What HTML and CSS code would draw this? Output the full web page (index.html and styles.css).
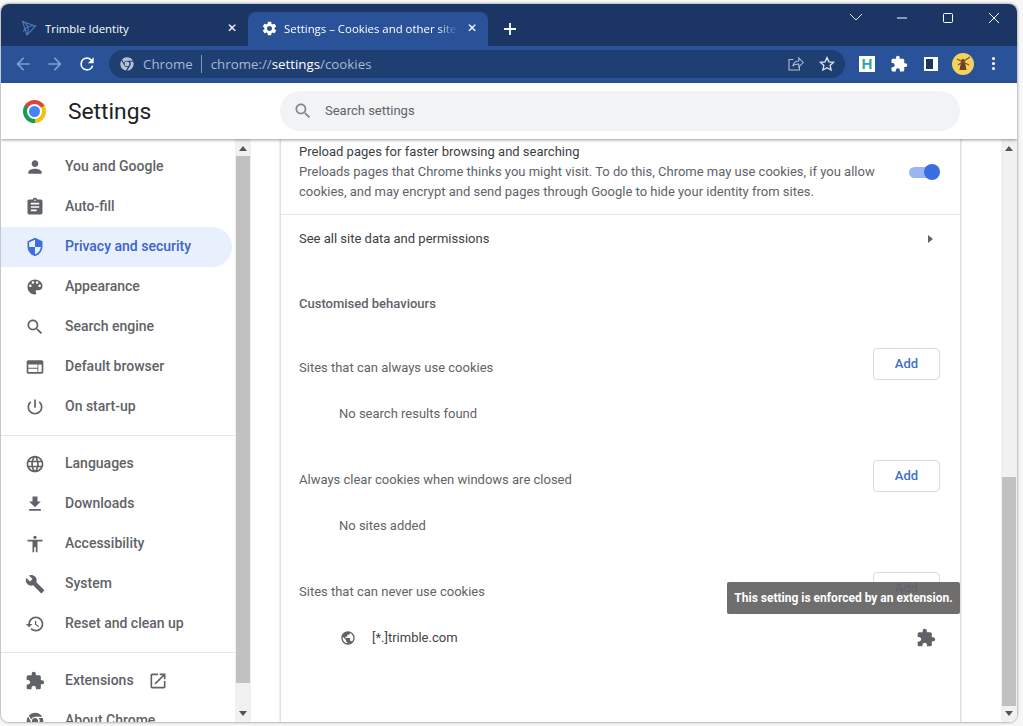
FILE: index.html
```html
<!DOCTYPE html>
<html lang="en">
<head>
<meta charset="utf-8">
<title>Settings – Cookies and other site settings</title>
<link rel="stylesheet" href="styles.css">
</head>
<body>
<svg class="defs" width="0" height="0">
  <symbol id="i-person" viewBox="0 0 24 24"><path d="M12 12c2.21 0 4-1.79 4-4s-1.79-4-4-4-4 1.79-4 4 1.79 4 4 4zm0 2c-2.67 0-8 1.34-8 4v2h16v-2c0-2.66-5.33-4-8-4z"/></symbol>
  <symbol id="i-assign" viewBox="0 0 24 24"><path d="M19 3h-4.18C14.4 1.84 13.3 1 12 1c-1.3 0-2.4.84-2.82 2H5c-1.1 0-2 .9-2 2v14c0 1.1.9 2 2 2h14c1.1 0 2-.9 2-2V5c0-1.1-.9-2-2-2zm-7 0c.55 0 1 .45 1 1s-.45 1-1 1-1-.45-1-1 .45-1 1-1zm2 14H7v-2h7v2zm3-4H7v-2h10v2zm0-4H7V7h10v2z"/></symbol>
  <symbol id="i-shield" viewBox="0 0 24 24"><path d="M12 1L3 5v6c0 5.55 3.84 10.74 9 12 5.16-1.26 9-6.45 9-12V5l-9-4zm0 10.99h7c-.53 4.12-3.28 7.79-7 8.94V12H5V6.3l7-3.11v8.8z"/></symbol>
  <symbol id="i-palette" viewBox="0 0 24 24"><path d="M12 3c-4.97 0-9 4.03-9 9s4.03 9 9 9c.83 0 1.5-.67 1.5-1.5 0-.39-.15-.74-.39-1.01-.23-.26-.38-.61-.38-.99 0-.83.67-1.5 1.5-1.5H16c2.76 0 5-2.24 5-5 0-4.42-4.03-8-9-8zm-5.5 9c-.83 0-1.5-.67-1.5-1.5S5.67 9 6.5 9 8 9.67 8 10.5 7.33 12 6.5 12zm3-4C8.67 8 8 7.33 8 6.5S8.67 5 9.5 5s1.5.67 1.5 1.5S10.33 8 9.5 8zm5 0c-.83 0-1.5-.67-1.5-1.5S13.67 5 14.5 5s1.5.67 1.5 1.5S15.33 8 14.5 8zm3 4c-.83 0-1.5-.67-1.5-1.5S16.67 9 17.5 9s1.5.67 1.5 1.5-.67 1.5-1.5 1.5z"/></symbol>
  <symbol id="i-search" viewBox="0 0 24 24"><path d="M15.5 14h-.79l-.28-.27C15.41 12.59 16 11.11 16 9.5 16 5.91 13.09 3 9.5 3S3 5.91 3 9.5 5.91 16 9.5 16c1.61 0 3.09-.59 4.23-1.57l.27.28v.79l5 4.99L20.49 19l-4.99-5zm-6 0C7.01 14 5 11.99 5 9.5S7.01 5 9.5 5 14 7.01 14 9.5 11.99 14 9.5 14z"/></symbol>
  <symbol id="i-web" viewBox="0 0 24 24"><path d="M20 4H4c-1.1 0-1.99.9-1.99 2L2 18c0 1.1.9 2 2 2h16c1.1 0 2-.9 2-2V6c0-1.1-.9-2-2-2zm-5 14H4v-4h11v4zm0-5H4V9h11v4zm5 5h-4V9h4v9z"/></symbol>
  <symbol id="i-power" viewBox="0 0 24 24"><path d="M13 3h-2v10h2V3zm4.83 2.17l-1.42 1.42C17.99 7.86 19 9.81 19 12c0 3.87-3.13 7-7 7s-7-3.13-7-7c0-2.19 1.01-4.14 2.58-5.42L6.17 5.17C4.23 6.82 3 9.26 3 12c0 4.97 4.03 9 9 9s9-4.03 9-9c0-2.74-1.23-5.18-3.17-6.83z"/></symbol>
  <symbol id="i-lang" viewBox="0 0 24 24"><path d="M11.99 2C6.47 2 2 6.48 2 12s4.47 10 9.99 10C17.52 22 22 17.52 22 12S17.52 2 11.99 2zm6.93 6h-2.95c-.32-1.25-.78-2.45-1.38-3.56 1.84.63 3.37 1.91 4.33 3.56zM12 4.04c.83 1.2 1.48 2.53 1.91 3.96h-3.82c.43-1.43 1.08-2.76 1.91-3.96zM4.26 14C4.1 13.36 4 12.69 4 12s.1-1.36.26-2h3.38c-.08.66-.14 1.32-.14 2 0 .68.06 1.34.14 2H4.26zm.82 2h2.95c.32 1.25.78 2.45 1.38 3.56-1.84-.63-3.37-1.9-4.33-3.56zm2.95-8H5.08c.96-1.66 2.49-2.93 4.33-3.56C8.81 5.55 8.35 6.75 8.03 8zM12 19.96c-.83-1.2-1.48-2.53-1.91-3.96h3.82c-.43 1.43-1.08 2.76-1.91 3.96zM14.34 14H9.66c-.09-.66-.16-1.32-.16-2 0-.68.07-1.35.16-2h4.68c.09.65.16 1.32.16 2 0 .68-.07 1.34-.16 2zm.25 5.56c.6-1.11 1.06-2.31 1.38-3.56h2.95c-.96 1.65-2.49 2.93-4.33 3.56zM16.36 14c.08-.66.14-1.32.14-2 0-.68-.06-1.34-.14-2h3.38c.16.64.26 1.31.26 2s-.1 1.36-.26 2h-3.38z"/></symbol>
  <symbol id="i-down" viewBox="0 0 24 24"><path d="M19 9h-4V3H9v6H5l7 7 7-7zM5 18v2h14v-2H5z"/></symbol>
  <symbol id="i-access" viewBox="0 0 24 24"><path d="M12 2c1.1 0 2 .9 2 2s-.9 2-2 2-2-.9-2-2 .9-2 2-2zm9 7h-6v13h-2v-6h-2v6H9V9H3V7h18v2z"/></symbol>
  <symbol id="i-build" viewBox="0 0 24 24"><path d="M22.7 19l-9.1-9.1c.9-2.3.4-5-1.5-6.9-2-2-5-2.4-7.4-1.3L9 6 6 9 1.6 4.7C.4 7.1.9 10.1 2.9 12.1c1.9 1.9 4.6 2.4 6.9 1.5l9.1 9.1c.4.4 1 .4 1.4 0l2.3-2.3c.5-.4.5-1.1.1-1.4z"/></symbol>
  <symbol id="i-restore" viewBox="0 0 24 24"><path d="M13 3c-4.97 0-9 4.03-9 9H1l3.89 3.89.07.14L9 12H6c0-3.87 3.13-7 7-7s7 3.13 7 7-3.13 7-7 7c-1.93 0-3.68-.79-4.94-2.06l-1.42 1.42C8.27 19.99 10.51 21 13 21c4.97 0 9-4.03 9-9s-4.03-9-9-9zm-1 5v5l4.28 2.54.72-1.21-3.5-2.08V8H12z"/></symbol>
  <symbol id="i-ext" viewBox="0 0 24 24"><path d="M20.5 11H19V7c0-1.1-.9-2-2-2h-4V3.5C13 2.12 11.88 1 10.5 1S8 2.12 8 3.5V5H4c-1.1 0-1.99.9-1.99 2v3.8H3.5c1.49 0 2.7 1.21 2.7 2.7s-1.21 2.7-2.7 2.7H2V20c0 1.1.9 2 2 2h3.8v-1.5c0-1.49 1.21-2.7 2.7-2.7 1.49 0 2.7 1.21 2.7 2.7V22H17c1.1 0 2-.9 2-2v-4h1.5c1.38 0 2.5-1.12 2.5-2.5S21.88 11 20.5 11z"/></symbol>
  <symbol id="i-open" viewBox="0 0 24 24"><path d="M19 19H5V5h7V3H5c-1.11 0-2 .9-2 2v14c0 1.1.89 2 2 2h14c1.1 0 2-.9 2-2v-7h-2v7zM14 3v2h3.59l-9.83 9.83 1.41 1.41L19 6.41V10h2V3h-7z"/></symbol>
  <symbol id="i-public" viewBox="0 0 24 24"><path d="M12 2C6.48 2 2 6.48 2 12s4.48 10 10 10 10-4.48 10-10S17.52 2 12 2zm-1 17.93c-3.95-.49-7-3.85-7-7.93 0-.62.08-1.21.21-1.79L9 15v1c0 1.1.9 2 2 2v1.93zm6.9-2.54c-.26-.81-1-1.39-1.9-1.39h-1v-3c0-.55-.45-1-1-1H8v-2h2c.55 0 1-.45 1-1V7h2c1.1 0 2-.9 2-2v-.41c2.93 1.19 5 4.06 5 7.41 0 2.08-.8 3.97-2.1 5.39z"/></symbol>
  <symbol id="i-gear" viewBox="0 0 24 24"><path d="M19.14 12.94c.04-.3.06-.61.06-.94 0-.32-.02-.64-.07-.94l2.03-1.58c.18-.14.23-.41.12-.61l-1.92-3.32c-.12-.22-.37-.29-.59-.22l-2.39.96c-.5-.38-1.03-.7-1.62-.94l-.36-2.54c-.04-.24-.24-.41-.48-.41h-3.84c-.24 0-.43.17-.47.41l-.36 2.54c-.59.24-1.13.57-1.62.94l-2.39-.96c-.22-.08-.47 0-.59.22L2.74 8.87c-.12.21-.08.47.12.61l2.03 1.58c-.05.3-.09.63-.09.94s.02.64.07.94l-2.03 1.58c-.18.14-.23.41-.12.61l1.92 3.32c.12.22.37.29.59.22l2.39-.96c.5.38 1.03.7 1.62.94l.36 2.54c.05.24.24.41.48.41h3.84c.24 0 .44-.17.47-.41l.36-2.54c.59-.24 1.13-.56 1.62-.94l2.39.96c.22.08.47 0 .59-.22l1.92-3.32c.12-.22.07-.47-.12-.61l-2.01-1.58zM12 15.6c-1.98 0-3.6-1.62-3.6-3.6s1.62-3.6 3.6-3.6 3.6 1.62 3.6 3.6-1.62 3.6-3.6 3.6z"/></symbol>
  <symbol id="i-chrome" viewBox="0 0 24 24"><path d="M12 2a10 10 0 0 1 8.66 5H12a5 5 0 0 0-4.62 3.09L4.6 5.3A10 10 0 0 1 12 2zM3.6 6.6l4.3 7.7a5 5 0 0 0 5.3 2.6l-2.8 5A10 10 0 0 1 3.6 6.6zM21.3 8.5a10 10 0 0 1-9 13.5l4.4-7.5a5 5 0 0 0-.3-6z"/><circle cx="12" cy="12" r="3.6"/></symbol>
</svg>

<div class="window">
  <div class="tabstrip">
    <div class="tab">
      <svg class="favicon" viewBox="0 0 16 16"><g fill="none" stroke="#4f78b8" stroke-width="1.1"><path d="M1.5 1.5L14.5 6 6 15z"/><path d="M1.5 1.5C6 3 9 8 6 15M14.5 6C9 5 4 8 2.5 11.5"/></g></svg>
      <span class="tab-title">Trimble Identity</span>
      <span class="tab-close">✕</span>
    </div>
    <div class="tab tab-active">
      <svg class="favicon favicon-white"><use href="#i-gear"/></svg>
      <span class="tab-title tab-fade">Settings – Cookies and other site settings</span>
      <span class="tab-close">✕</span>
    </div>
    <svg class="newtab" viewBox="0 0 14 14"><path d="M7 1v12M1 7h12" stroke="#fff" stroke-width="1.8" fill="none"/></svg>
    <div class="winctl">
      <svg class="ctl" viewBox="0 0 46 28"><path d="M17 10l6 6 6-6" stroke="#dfe5ef" fill="none"/></svg>
      <svg class="ctl" viewBox="0 0 46 28"><path d="M18 14h10" stroke="#fff" fill="none"/></svg>
      <svg class="ctl" viewBox="0 0 46 28"><rect x="18.5" y="9.5" width="9" height="9" rx="1" stroke="#fff" fill="none"/></svg>
      <svg class="ctl" viewBox="0 0 46 28"><path d="M18 9l10 10M28 9L18 19" stroke="#fff" fill="none"/></svg>
    </div>
  </div>

  <div class="toolbar">
    <svg class="nav-ico" viewBox="0 0 24 24"><path d="M20 11H7.83l5.59-5.59L12 4l-8 8 8 8 1.41-1.41L7.83 13H20v-2z" fill="#7f9cd0"/></svg>
    <svg class="nav-ico" viewBox="0 0 24 24"><path d="M4 11h12.17l-5.59-5.59L12 4l8 8-8 8-1.41-1.41L16.17 13H4v-2z" fill="#7f9cd0"/></svg>
    <svg class="nav-ico" viewBox="0 0 24 24"><path d="M17.65 6.35A7.96 7.96 0 0 0 12 4a8 8 0 1 0 7.73 10h-2.08A6 6 0 1 1 12 6c1.66 0 3.14.69 4.22 1.78L13 11h7V4l-2.35 2.35z" fill="#fff"/></svg>
    <div class="omnibox">
      <svg class="omni-chrome"><use href="#i-chrome"/></svg>
      <span class="omni-site">Chrome</span>
      <span class="omni-sep"></span>
      <span class="omni-url">chrome://<b>settings</b>/cookies</span>
      <span class="omni-right">
        <svg class="omni-ico" viewBox="0 0 24 24"><path d="M10 6H4v14h14v-4M9 15c1-5 5-7 8-7V4l6 6-6 6v-4c-3 0-6 0-8 3z" fill="none" stroke="#b3c0d6" stroke-width="1.4"/></svg>
        <svg class="omni-ico" viewBox="0 0 24 24"><path d="M12 3.5l2.6 5.6 6.1.7-4.5 4.2 1.2 6L12 17l-5.4 3 1.2-6-4.5-4.2 6.1-.7z" fill="none" stroke="#dde4ef" stroke-width="1.8"/></svg>
      </span>
    </div>
    <div class="actions">
      <span class="ext-h">H</span>
      <svg class="act-ico"><use href="#i-ext"/></svg>
      <span class="sidepanel"></span>
      <svg class="avatar" viewBox="0 0 22 22"><circle cx="11" cy="11" r="11" fill="#f3d35c"/><path d="M9 9h4l1.5 8h-7z" fill="#6b4423"/><circle cx="11" cy="8" r="2" fill="#6b4423"/><path d="M5 6l12 6M18 4L6 12" stroke="#8a4b2a" stroke-width="1.2"/></svg>
      <span class="dots"><i></i><i></i><i></i></span>
    </div>
  </div>

  <header class="apphead">
    <span class="logo"><span class="logo-core"></span></span>
    <h1 class="apptitle">Settings</h1>
    <div class="searchbox">
      <svg class="search-ico"><use href="#i-search"/></svg>
      <span class="search-text">Search settings</span>
    </div>
  </header>

  <div class="body">
    <nav class="sidebar">
      <a class="item"><svg class="ico"><use href="#i-person"/></svg>You and Google</a>
      <a class="item"><svg class="ico"><use href="#i-assign"/></svg>Auto-fill</a>
      <a class="item item-active"><svg class="ico"><use href="#i-shield"/></svg>Privacy and security</a>
      <a class="item"><svg class="ico"><use href="#i-palette"/></svg>Appearance</a>
      <a class="item"><svg class="ico"><use href="#i-search"/></svg>Search engine</a>
      <a class="item"><svg class="ico"><use href="#i-web"/></svg>Default browser</a>
      <a class="item"><svg class="ico"><use href="#i-power"/></svg>On start-up</a>
      <div class="rule"></div>
      <a class="item"><svg class="ico"><use href="#i-lang"/></svg>Languages</a>
      <a class="item"><svg class="ico"><use href="#i-down"/></svg>Downloads</a>
      <a class="item"><svg class="ico"><use href="#i-access"/></svg>Accessibility</a>
      <a class="item"><svg class="ico"><use href="#i-build"/></svg>System</a>
      <a class="item"><svg class="ico"><use href="#i-restore"/></svg>Reset and clean up</a>
      <div class="rule"></div>
      <a class="item"><svg class="ico"><use href="#i-ext"/></svg>Extensions<svg class="ico-open"><use href="#i-open"/></svg></a>
      <a class="item"><svg class="ico"><use href="#i-chrome"/></svg>About Chrome</a>
    </nav>
    <div class="scroll scroll-side"><span class="arrow-up"></span><span class="thumb thumb-side"></span><span class="arrow-down"></span></div>

    <main class="content">
      <section class="card">
        <div class="preload">
          <div class="preload-text">
            <div class="title">Preload pages for faster browsing and searching</div>
            <div class="desc">Preloads pages that Chrome thinks you might visit. To do this, Chrome may use cookies, if you allow cookies, and may encrypt and send pages through Google to hide your identity from sites.</div>
          </div>
          <span class="toggle"><span class="knob"></span></span>
        </div>
        <div class="linkrow"><span>See all site data and permissions</span><span class="tri"></span></div>
        <h2 class="subhead">Customised behaviours</h2>

        <div class="block">
          <div class="block-head"><span class="label">Sites that can always use cookies</span><button class="add">Add</button></div>
          <div class="empty">No search results found</div>
        </div>
        <div class="block">
          <div class="block-head"><span class="label">Always clear cookies when windows are closed</span><button class="add">Add</button></div>
          <div class="empty">No sites added</div>
        </div>
        <div class="block block-last">
          <div class="block-head"><span class="label">Sites that can never use cookies</span><button class="add">Add</button></div>
          <div class="site">
            <svg class="site-globe"><use href="#i-public"/></svg>
            <span class="site-name">[*.]trimble.com</span>
            <svg class="site-ext"><use href="#i-ext"/></svg>
          </div>
          <div class="tooltip">This setting is enforced by an extension.</div>
        </div>
      </section>
    </main>
    <div class="scroll scroll-page"><span class="arrow-up"></span><span class="thumb thumb-page"></span><span class="arrow-down"></span></div>
  </div>
</div>
</body>
</html>
```

FILE: styles.css
```css
* { box-sizing: border-box; }
html, body { margin: 0; height: 100%; }
body { background: #f7f7f7; font-family: Roboto, "Liberation Sans", sans-serif; overflow: hidden; padding: 4px 6px 0 1px; }
.defs { position: absolute; }
.window { width: 1016px; height: 718px; display: flex; flex-direction: column; border-radius: 8px; overflow: hidden; background: #fff; box-shadow: 0 0 3px rgba(0,0,0,.55); }

/* tab strip */
.tabstrip { height: 42px; flex: none; background: #1b3664; display: flex; align-items: flex-end; padding-left: 7px; }
.tab { width: 240px; height: 34px; display: flex; align-items: center; padding: 0 8px 2px 13px; color: #fff; font: 11.4px "Open Sans", sans-serif; }
.tab-active { background: #2a5298; border-radius: 8px 8px 0 0; }
.favicon { width: 16px; height: 16px; margin-right: 8px; flex: none; }
.favicon-white { fill: #fff; width: 17px; height: 17px; margin-right: 6px; }
.tab-title { flex: 1; white-space: nowrap; overflow: hidden; }
.tab-fade { -webkit-mask-image: linear-gradient(90deg, #000 88%, transparent); mask-image: linear-gradient(90deg, #000 88%, transparent); }
.tab-close { width: 16px; margin-left: 6px; text-align: center; font: 700 12px "DejaVu Sans", sans-serif; }
.newtab { width: 14px; height: 14px; margin: 0 0 10px 15px; }
.winctl { margin-left: auto; align-self: flex-start; display: flex; }
.ctl { width: 46px; height: 28px; }

/* toolbar */
.toolbar { height: 37px; flex: none; background: #2a5298; display: flex; align-items: center; padding: 0 0 2px 12px; }
.nav-ico { width: 20px; height: 20px; margin-right: 12px; flex: none; }
.omnibox { width: 736px; height: 28px; background: #1f3f72; border-radius: 14px; display: flex; align-items: center; padding-left: 10px; color: #a9b8d2; font: 13.3px "Open Sans", sans-serif; }
.omni-chrome { width: 16px; height: 16px; fill: #b7c0cf; margin-right: 8px; flex: none; }
.omni-sep { width: 1px; height: 18px; background: #8296b8; margin: 0 9px 0 8px; }
.omni-url b { font-weight: 400; color: #fff; }
.omni-right { margin-left: auto; display: flex; align-items: center; gap: 14px; padding-right: 9px; }
.omni-ico { width: 18px; height: 18px; }
.actions { display: flex; align-items: center; margin-left: 14px; }
.ext-h { width: 16px; height: 16px; background: #fff; color: #2ea3a8; font: 700 15px/16px "Liberation Sans", sans-serif; text-align: center; }
.act-ico { width: 18px; height: 18px; fill: #fff; margin-left: 15px; }
.sidepanel { width: 14px; height: 14px; border: 2px solid #fff; border-right-width: 5px; background: #1b3664; margin-left: 16px; }
.avatar { width: 22px; height: 22px; margin-left: 14px; }
.dots { display: flex; flex-direction: column; gap: 2px; margin-left: 18px; }
.dots i { width: 3px; height: 3px; border-radius: 50%; background: #fff; }

/* header */
.apphead { height: 56px; flex: none; display: flex; align-items: center; background: #fff; position: relative; z-index: 2; box-shadow: 0 1px 3px rgba(0,0,0,.4); padding-left: 22px; }
.logo { width: 23px; height: 23px; border-radius: 50%; background: conic-gradient(from 300deg, #db4437 0 120deg, #f4c20d 0 240deg, #0f9d58 0); display: flex; align-items: center; justify-content: center; flex: none; }
.logo-core { width: 11px; height: 11px; border-radius: 50%; background: #4285f4; box-shadow: 0 0 0 2px #fff; }
.apptitle { margin: 0 0 0 22px; width: 212px; font: 400 22.8px Roboto, sans-serif; color: #202124; }
.searchbox { width: 680px; height: 40px; border-radius: 20px; background: #f1f3f4; display: flex; align-items: center; padding-left: 13px; color: #5f6368; font-size: 13px; }
.search-ico { width: 20px; height: 20px; fill: #80868b; margin-right: 12px; }
.search-text { padding-bottom: 1px; }

/* body */
.body { flex: 1; min-height: 0; display: flex; background: #fff; }
.sidebar { width: 234px; flex: none; overflow: hidden; padding-top: 8px; }
.item { height: 40px; display: flex; align-items: center; padding-bottom: 2px; color: #5f6368; font-weight: 500; font-size: 14px; border-radius: 0 20px 20px 0; width: 231px; }
.ico { width: 20px; height: 20px; fill: #5f6368; margin: 2px 20px 0 24px; flex: none; }
.item-active { background: #e8f0fe; color: #3b62cf; }
.item-active .ico { fill: #3b6fe0; }
.ico-open { width: 20px; height: 20px; fill: #5f6368; margin: 2px 0 0 14px; }
.rule { height: 1px; width: 234px; background: #e6e7e9; margin: 8px 0; }

/* scrollbars */
.scroll { width: 16px; flex: none; background: #f1f1f1; display: flex; flex-direction: column; align-items: center; padding: 7px 1px 6px; }
.arrow-up { width: 0; height: 0; border: 4px solid transparent; border-top: 0; border-bottom: 5px solid #555; flex: none; }
.arrow-down { width: 0; height: 0; border: 4px solid transparent; border-bottom: 0; border-top: 5px solid #555; flex: none; margin-top: auto; }
.thumb { width: 14px; background: #c1c1c1; flex: none; }
.thumb-side { height: 527px; margin-top: 5px; }
.thumb-page { height: 229px; margin-top: 326px; }

/* content */
.content { flex: 1; min-width: 0; overflow: hidden; padding-left: 29px; background: #fff; }
.card { width: 681px; height: 100%; border-left: 1px solid #dfe0e2; border-right: 1px solid #dfe0e2; box-shadow: 0 0 2px rgba(60,64,67,.25); background: #fff; color: #5f6368; font-size: 13px; line-height: 20px; }
.preload { height: 76px; display: flex; padding: 3px 20px 0 18px; border-bottom: 1px solid #e6e7e9; }
.preload-text { width: 590px; }
.title { color: #3c4043; }
.toggle { position: relative; width: 28px; height: 11px; margin: 25px 0 0 20px; border-radius: 6px; background: #9ab5f1; flex: none; }
.knob { position: absolute; right: -3px; top: -3px; width: 16px; height: 16px; border-radius: 50%; background: #3b6fe0; }
.linkrow { height: 48px; display: flex; align-items: center; justify-content: space-between; padding: 0 27px 0 18px; color: #3c4043; }
.tri { width: 0; height: 0; border: 4px solid transparent; border-right: 0; border-left: 5px solid #5f6368; }
.subhead { margin: 31px 0 34px; padding-left: 18px; font: 500 13px/20px Roboto, sans-serif; color: #5f6368; }
.block { position: relative; padding: 0 20px 0 18px; height: 112px; }
.block-head { display: flex; justify-content: space-between; height: 32px; }
.label { padding-top: 10px; }
.add { width: 67px; height: 32px; padding: 0 0 2px; background: #fff; border: 1px solid #dadce0; border-radius: 4px; color: #3b6fd0; font: 500 13px Roboto, sans-serif; }
.empty { margin: 24px 0 0 40px; }
.site { display: flex; align-items: center; margin: 24px 0 0 41px; height: 20px; }
.site-globe { width: 16px; height: 16px; fill: #5f6368; margin-right: 16px; }
.site-name { color: #444; }
.site-ext { width: 20px; height: 20px; fill: #5f6368; margin-left: auto; margin-right: 4px; }
.tooltip { position: absolute; left: 446px; top: 10px; width: 233px; height: 32px; background: rgba(99,99,99,.93); border-radius: 2px; color: #fff; font: 700 12px/32px Roboto, sans-serif; text-align: center; white-space: nowrap; }
```
